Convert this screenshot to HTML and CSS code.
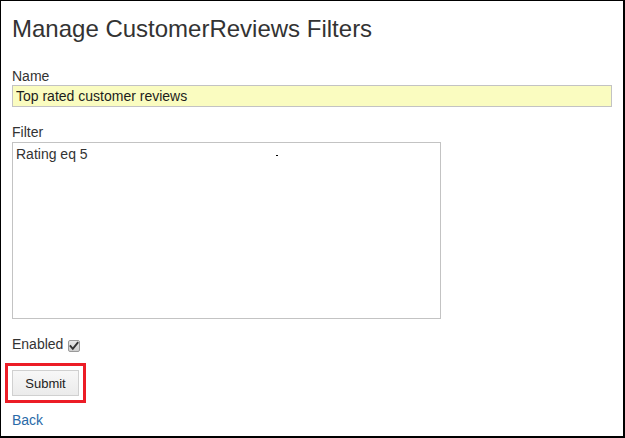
FILE: index.html
```html
<!DOCTYPE html>
<html>
<head>
<meta charset="utf-8">
<link rel="stylesheet" href="styles.css">
</head>
<body>
<div class="frame">
  <h1 class="title">Manage CustomerReviews Filters</h1>
  <label class="label label-name" for="name">Name</label>
  <input class="name-input" id="name" type="text" value="Top rated customer reviews">
  <label class="label label-filter" for="filter">Filter</label>
  <div class="filter-wrap">
    <textarea class="filter-input" id="filter">Rating eq 5</textarea>
    <span class="cursor-mark"></span>
  </div>
  <div class="enabled-row">
    <span class="enabled-text">Enabled</span>
    <span class="checkbox"><svg width="10" height="10" viewBox="0 0 10 10"><path d="M1.5 5.2 L3.8 7.8 L8.6 1.8" fill="none" stroke="#333" stroke-width="1.9" stroke-linecap="square"/></svg></span>
  </div>
  <div class="highlight">
    <button class="submit" type="button">Submit</button>
  </div>
  <a class="back" href="#">Back</a>
</div>
</body>
</html>
```

FILE: styles.css
```css
html, body {
  margin: 0;
  padding: 0;
  background: #ffffff;
}
.frame {
  box-sizing: border-box;
  width: 625px;
  height: 438px;
  border-top: 1px solid #000;
  border-left: 1px solid #000;
  border-right: 2px solid #000;
  border-bottom: 2px solid #000;
  padding: 14px 0 0 11px;
  display: flex;
  flex-direction: column;
  align-items: flex-start;
  font-family: "Liberation Sans", Arial, sans-serif;
  color: #333;
}
.title {
  margin: 0;
  font-size: 24px;
  line-height: 28px;
  font-weight: normal;
  color: #333;
}
.label {
  display: block;
  font-size: 14px;
  line-height: 19px;
  margin-top: 24px;
  color: #333;
}
.label-name {
  line-height: 18px;
}
.label-filter {
  margin-top: 16px;
}
.name-input {
  box-sizing: border-box;
  width: 600px;
  height: 22px;
  margin: 0;
  padding: 0 3px;
  border: 1px solid #c3c3c3;
  background: #fafcc0;
  font-family: "Liberation Sans", Arial, sans-serif;
  font-size: 14px;
  color: #1c1c1c;
  outline: none;
}
.filter-wrap {
  position: relative;
}
.filter-input {
  display: block;
  box-sizing: border-box;
  width: 429px;
  height: 177px;
  margin: 0;
  padding: 3px 3px;
  border: 1px solid #c3c3c3;
  background: #fff;
  font-family: "Liberation Sans", Arial, sans-serif;
  font-size: 14px;
  color: #333;
  resize: none;
  outline: none;
  overflow: hidden;
}
.cursor-mark {
  position: absolute;
  left: 264px;
  top: 13px;
  width: 2px;
  height: 1px;
  background: #000;
}
.enabled-row {
  display: flex;
  align-items: center;
  gap: 5px;
  margin-top: 16px;
  height: 19px;
  font-size: 14px;
  line-height: 19px;
}
.checkbox {
  box-sizing: border-box;
  width: 12px;
  height: 12px;
  border: 1px solid #9a9a9a;
  border-radius: 2px;
  background: linear-gradient(#e8e8e8, #cfcfcf);
  display: flex;
  align-items: center;
  justify-content: center;
  margin-top: 2px;
}
.checkbox svg {
  display: block;
}
.highlight {
  margin-top: 9px;
  margin-left: -7px;
  border: 3px solid #ec1c26;
  padding: 4px;
  display: flex;
}
.submit {
  box-sizing: border-box;
  width: 67px;
  height: 26px;
  margin: 0;
  padding: 0;
  border: 1px solid #d0d0d0;
  background: linear-gradient(#f7f7f7, #ebebeb);
  font-family: "Liberation Sans", Arial, sans-serif;
  font-size: 13px;
  color: #222;
}
.back {
  margin-top: 8px;
  font-size: 14px;
  line-height: 19px;
  color: #2a6aa8;
  text-decoration: none;
}
```
